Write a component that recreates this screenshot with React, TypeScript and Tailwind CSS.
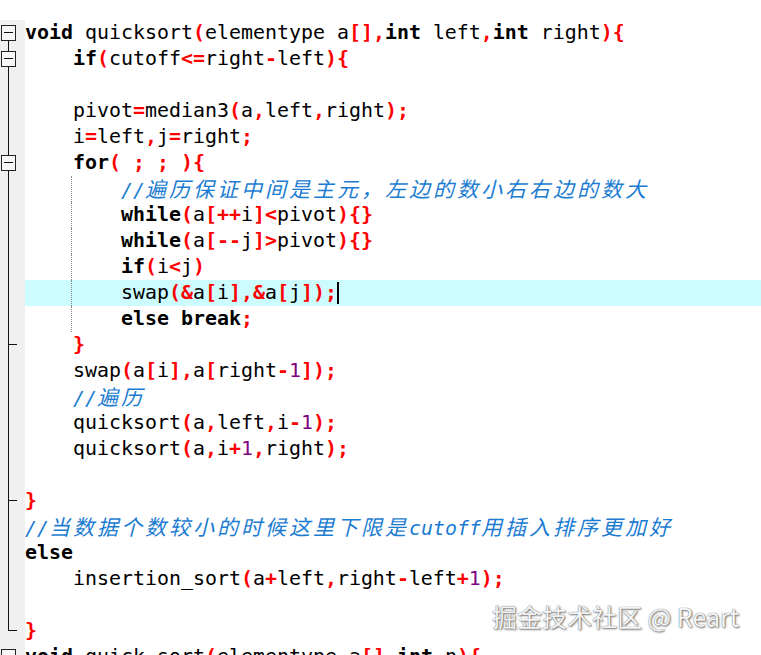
import React from 'react';

type Fold = 'boxTop' | 'boxMid' | 'line' | 'tick' | 'end' | 'boxOnly';

const lines: { text: string; fold: Fold; guide?: boolean; active?: boolean }[] = [
  { text: 'void quicksort(elementype a[],int left,int right){', fold: 'boxTop' },
  { text: '    if(cutoff<=right-left){', fold: 'boxMid' },
  { text: '', fold: 'line' },
  { text: '    pivot=median3(a,left,right);', fold: 'line' },
  { text: '    i=left,j=right;', fold: 'line' },
  { text: '    for( ; ; ){', fold: 'boxMid' },
  { text: '        //遍历保证中间是主元，左边的数小右右边的数大', fold: 'line', guide: true },
  { text: '        while(a[++i]<pivot){}', fold: 'line', guide: true },
  { text: '        while(a[--j]>pivot){}', fold: 'line', guide: true },
  { text: '        if(i<j)', fold: 'line', guide: true },
  { text: '        swap(&a[i],&a[j]);', fold: 'line', guide: true, active: true },
  { text: '        else break;', fold: 'line', guide: true },
  { text: '    }', fold: 'tick' },
  { text: '    swap(a[i],a[right-1]);', fold: 'line' },
  { text: '    //遍历', fold: 'line' },
  { text: '    quicksort(a,left,i-1);', fold: 'line' },
  { text: '    quicksort(a,i+1,right);', fold: 'line' },
  { text: '', fold: 'line' },
  { text: '}', fold: 'tick' },
  { text: '//当数据个数较小的时候这里下限是cutoff用插入排序更加好', fold: 'line' },
  { text: 'else', fold: 'line' },
  { text: '    insertion_sort(a+left,right-left+1);', fold: 'line' },
  { text: '', fold: 'line' },
  { text: '}', fold: 'end' },
  { text: 'void quick_sort(elementype a[],int n){', fold: 'boxOnly' },
];

const keywords = new Set(['void', 'int', 'if', 'for', 'while', 'else', 'break']);
const punct = '()[]{},;=<>+-&';

const FoldMark = ({ fold }: { fold: Fold }) => {
  const hasBox = fold === 'boxTop' || fold === 'boxMid' || fold === 'boxOnly';
  return (
    <svg width="22" height="26" className="block shrink-0">
      {fold === 'boxMid' && <rect x="8" y="0" width="1" height="5" fill="#111" />}
      {(fold === 'boxTop' || fold === 'boxMid') && <rect x="8" y="21" width="1" height="5" fill="#111" />}
      {(fold === 'line' || fold === 'tick') && <rect x="8" y="0" width="1" height="26" fill="#111" />}
      {fold === 'end' && <rect x="8" y="0" width="1" height="13" fill="#111" />}
      {(fold === 'tick' || fold === 'end') && <rect x="8" y="12" width="9" height="1" fill="#111" />}
      {hasBox && (
        <>
          <rect x="1.5" y="5.5" width="14" height="15" fill="#f7f7f7" stroke="#222" strokeWidth="1" />
          <rect x="4" y="12" width="9" height="1" fill="#111" />
        </>
      )}
    </svg>
  );
};

const Comment = ({ text }: { text: string }) => {
  const parts = text.match(/[\u3000-\u9fff\uff00-\uffef]+|[^\u3000-\u9fff\uff00-\uffef]+/g) || [];
  return (
    <span className="italic text-[#1c7cd2]">
      {parts.map((p, i) =>
        /[\u3000-\u9fff\uff00-\uffef]/.test(p) ? (
          <span key={i} className="font-['Noto_Sans_CJK_SC',sans-serif] text-[21px] tracking-[3px] leading-[26px]">
            {p}
          </span>
        ) : (
          <span key={i}>{p}</span>
        )
      )}
    </span>
  );
};

const CodeText = ({ text }: { text: string }) => {
  const out: React.ReactNode[] = [];
  const re = /(\/\/.*$)|([A-Za-z_][A-Za-z0-9_]*)|(\d+)|(\s+)|(.)/g;
  let m: RegExpExecArray | null;
  let k = 0;
  while ((m = re.exec(text))) {
    if (m[1]) out.push(<Comment key={k++} text={m[1]} />);
    else if (m[2]) {
      out.push(
        <span key={k++} className={keywords.has(m[2]) ? 'font-bold' : ''}>
          {m[2]}
        </span>
      );
    } else if (m[3]) out.push(<span key={k++} className="text-[#800080]">{m[3]}</span>);
    else if (m[4]) out.push(<span key={k++}>{m[4]}</span>);
    else if (m[5]) {
      out.push(
        <span key={k++} className={punct.includes(m[5]) ? 'font-bold text-[#f00]' : ''}>
          {m[5]}
        </span>
      );
    }
  }
  return <>{out}</>;
};

export default function App() {
  return (
    <div className="relative w-[761px] h-[655px] overflow-hidden bg-white">
      <div className="flex flex-col pt-[20px]">
        {lines.map((l, i) => (
          <div key={i} className="flex h-[26px] bg-[#f0f0f0]">
            <FoldMark fold={l.fold} />
            <div
              className={`ml-[3px] flex-1 flex items-center whitespace-pre font-['DejaVu_Sans_Mono',monospace] text-[19.93px] leading-[26px] text-black ${
                l.active ? 'bg-[#ccfcfd]' : 'bg-white'
              }`}
            >
              {l.guide ? (
                <>
                  <span className="inline-block w-[46px] h-[26px]" />
                  <span className="inline-block w-[2px] h-[26px] border-l border-dotted border-[#8a8a8a]" />
                  <CodeText text={l.text.slice(4)} />
                </>
              ) : (
                <CodeText text={l.text} />
              )}
              {l.active && <span className="inline-block w-[2px] h-[22px] bg-black" />}
            </div>
          </div>
        ))}
      </div>
      <div className="absolute left-[492px] top-[604px] font-['Noto_Sans_CJK_SC',sans-serif] text-[25px] leading-none text-[#f4f4f4] [text-shadow:0_0_1px_#555,1px_1px_2px_rgba(0,0,0,0.55)] whitespace-nowrap">
        掘金技术社区 @ Reart
      </div>
    </div>
  );
}
